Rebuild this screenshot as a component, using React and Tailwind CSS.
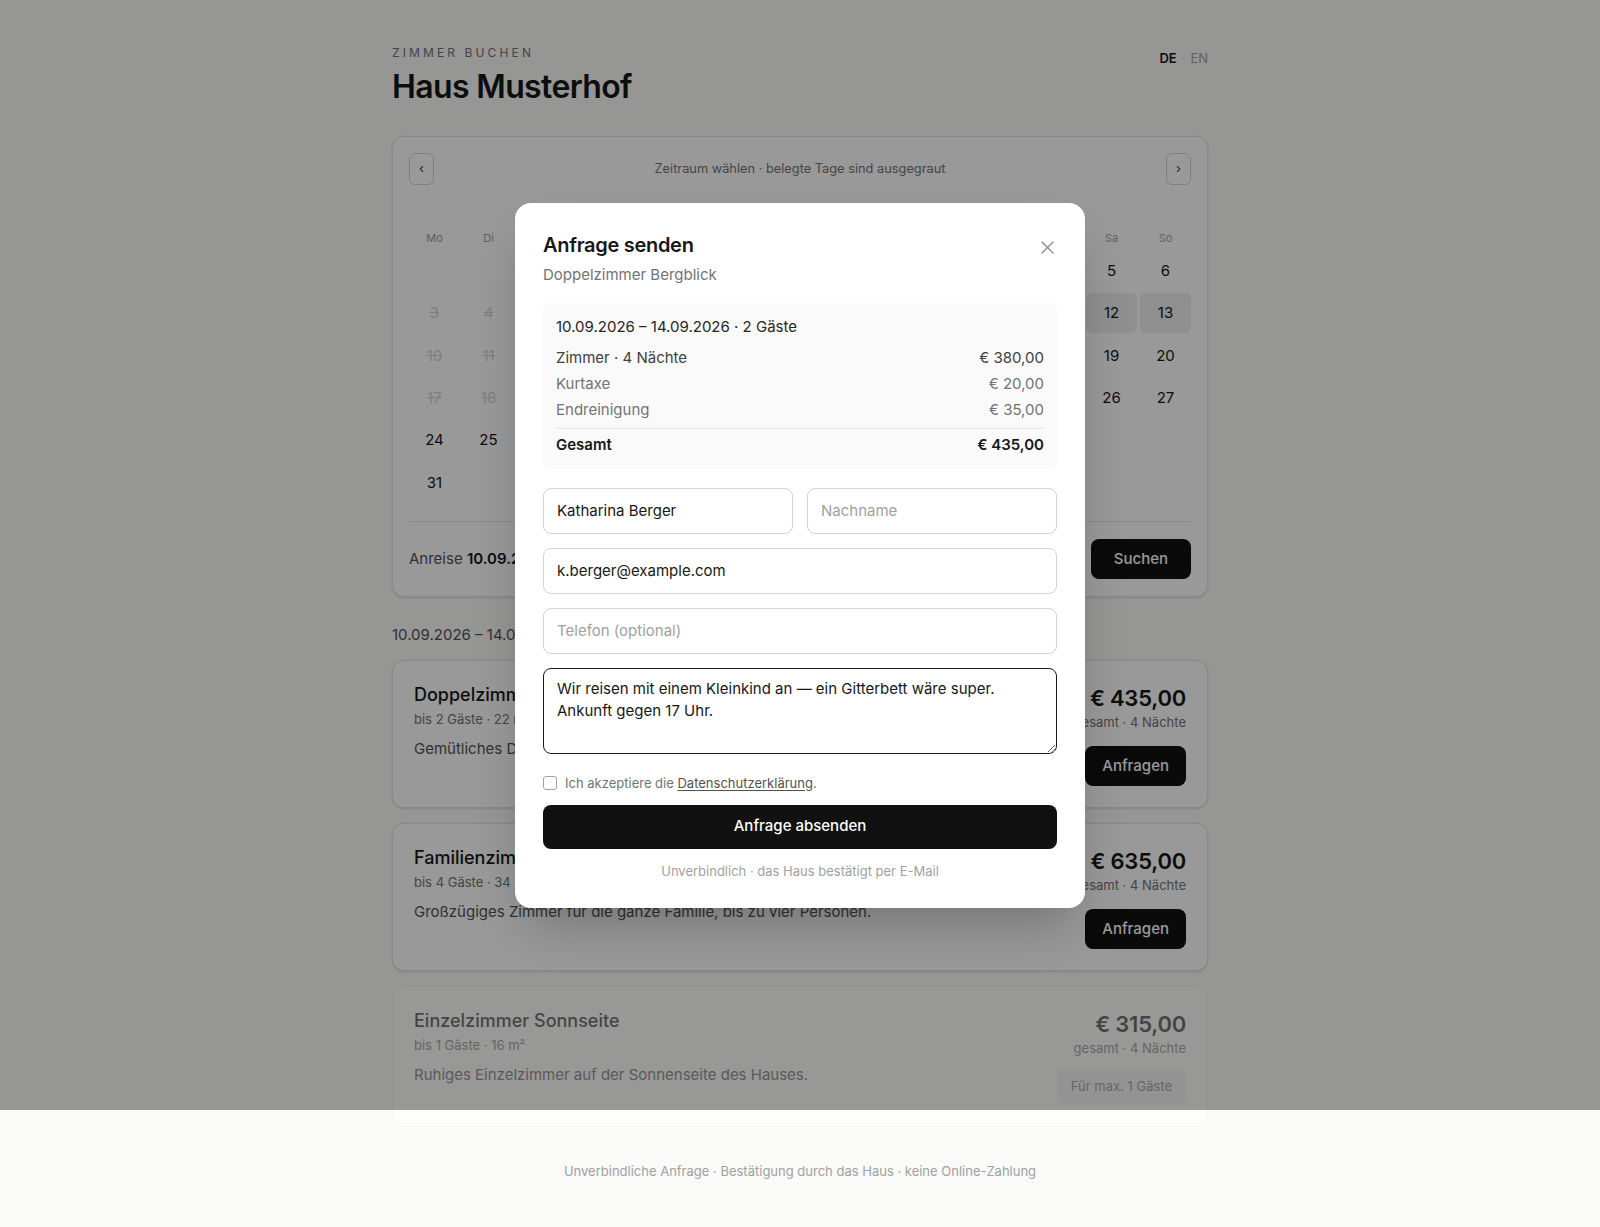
import React, { useEffect, useRef } from "react";

const weekdays = ["Mo", "Di", "Mi", "Do", "Fr", "Sa", "So"];

function Month({ title, offset, days, booked, start, end }) {
  const cells = [];
  for (let i = 0; i < offset; i++) cells.push(null);
  for (let d = 1; d <= days; d++) cells.push(d);
  return (
    <div>
      <div className="text-center text-[14px] leading-5 font-medium text-neutral-800">{title}</div>
      <div className="mt-[8px] grid grid-cols-7 gap-[3px]">
        {weekdays.map((w) => (
          <div key={w} className="text-center text-[11px] leading-[14px] text-neutral-400">
            {w}
          </div>
        ))}
      </div>
      <div className="mt-[6px] grid grid-cols-7 gap-x-[3px] gap-y-[2.4px]">
        {cells.map((d, i) => {
          if (d === null) return <div key={i} className="h-10" />;
          const isBooked = booked.includes(d);
          const isEdge = d === start || d === end;
          const inRange = start && end && d > start && d < end;
          let cls = "text-neutral-900";
          if (isBooked) cls = "text-neutral-300 line-through";
          if (isEdge) cls = "bg-neutral-900 text-white";
          if (inRange) cls = "bg-[#eeeeee] text-neutral-900";
          return (
            <div
              key={i}
              className={"flex h-10 items-center justify-center rounded-md text-[15px] " + cls}
            >
              {d}
            </div>
          );
        })}
      </div>
    </div>
  );
}

function Room({ title, meta, desc, price, disabled }) {
  return (
    <div
      className={
        "flex justify-between rounded-xl border bg-white p-[21px] " +
        (disabled ? "border-neutral-100 opacity-60" : "border-neutral-200 shadow-sm")
      }
    >
      <div>
        <div className="text-[18px] leading-[26px] font-medium text-neutral-900">{title}</div>
        <div className="mt-[2px] text-[13px] leading-[18px] text-neutral-500">{meta}</div>
        <div className="mt-[10px] text-[15px] leading-[22px] text-neutral-600">{desc}</div>
      </div>
      <div className="flex flex-col items-end">
        <div className="mt-[1px] text-[22px] leading-[30px] font-semibold tracking-[-0.01em] text-neutral-900">{price}</div>
        <div className="text-[13px] leading-[18px] text-neutral-500">gesamt · 4 Nächte</div>
        {disabled ? (
          <div className="mt-[12px] flex h-[36px] items-center rounded-lg bg-neutral-100 px-[14px] text-[13px] text-neutral-500">
            Für max. 1 Gäste
          </div>
        ) : (
          <button className="mt-[15px] h-10 rounded-lg bg-[#111111] px-[17px] text-[15px] font-medium text-white">
            Anfragen
          </button>
        )}
      </div>
    </div>
  );
}

function Input({ value, placeholder }) {
  return (
    <input
      readOnly
      defaultValue={value}
      placeholder={placeholder}
      className="h-[46px] w-full rounded-lg border border-neutral-300 bg-white px-[13px] text-[15px] text-neutral-900 outline-none placeholder:text-neutral-400"
    />
  );
}

export default function App() {
  const ta = useRef(null);
  useEffect(() => {
    const el = ta.current;
    if (el) {
      el.focus();
      const n = el.value.length;
      el.setSelectionRange(n, n);
    }
  }, []);

  return (
    <div className="relative min-h-[1227px] bg-[#fafaf9] font-['Inter',sans-serif] text-neutral-900">
      <div className="mx-auto w-[816px] pt-[45px] pb-[45px]">
        <header className="flex items-start justify-between">
          <div>
            <div className="text-[12px] leading-4 tracking-[0.26em] text-neutral-500">ZIMMER BUCHEN</div>
            <h1 className="mt-[7px] text-[32px] leading-[38px] font-semibold tracking-[-0.02em] text-neutral-900">
              Haus Musterhof
            </h1>
          </div>
          <div className="mt-[3px] flex items-center gap-[5px] text-[13px] leading-5">
            <span className="font-semibold text-neutral-900">DE</span>
            <span className="text-neutral-300">·</span>
            <span className="text-neutral-400">EN</span>
          </div>
        </header>

        <section className="mt-[30px] rounded-xl border border-neutral-200 bg-white px-4 pt-4 pb-[17px] shadow-sm">
          <div className="flex items-center justify-between">
            <button className="flex h-8 w-[25px] items-center justify-center rounded-md border border-neutral-300 text-[13px] text-neutral-700">
              ‹
            </button>
            <span className="text-[12.8px] text-neutral-500">Zeitraum wählen · belegte Tage sind ausgegraut</span>
            <button className="flex h-8 w-[25px] items-center justify-center rounded-md border border-neutral-300 text-[13px] text-neutral-700">
              ›
            </button>
          </div>
          <div className="mt-[18px] grid grid-cols-2 gap-8">
            <Month
              title="August 2026"
              offset={5}
              days={31}
              booked={[3, 4, 5, 6, 7, 8, 9, 10, 11, 12, 13, 14, 15, 16, 17, 18, 19, 20, 21, 22, 23]}
            />
            <Month title="September 2026" offset={1} days={30} booked={[]} start={10} end={14} />
          </div>
          <div className="mt-[18px] flex items-center justify-between border-t border-neutral-200 pt-[17px]">
            <div className="text-[15px] text-neutral-600">
              Anreise <span className="font-semibold text-neutral-900">10.09.2026</span>
              <span className="mx-2 text-neutral-300">→</span>
              Abreise <span className="font-semibold text-neutral-900">14.09.2026</span>
            </div>
            <button className="h-10 rounded-lg bg-[#111111] px-[23px] text-[15px] font-medium text-white">
              Suchen
            </button>
          </div>
        </section>

        <div className="mt-[27px] text-[15px] leading-[22px] text-neutral-600">
          10.09.2026 – 14.09.2026 · 4 Nächte · 2 Gäste
        </div>

        <div className="mt-[14px] flex flex-col gap-[15px]">
          <Room
            title="Doppelzimmer Bergblick"
            meta="bis 2 Gäste · 22 m²"
            desc="Gemütliches Doppelzimmer mit Balkon und Blick auf die Berge."
            price="€ 435,00"
          />
          <Room
            title="Familienzimmer Almrausch"
            meta="bis 4 Gäste · 34 m²"
            desc="Großzügiges Zimmer für die ganze Familie, bis zu vier Personen."
            price="€ 635,00"
          />
          <Room
            title="Einzelzimmer Sonnseite"
            meta="bis 1 Gäste · 16 m²"
            desc="Ruhiges Einzelzimmer auf der Sonnenseite des Hauses."
            price="€ 315,00"
            disabled
          />
        </div>

        <div className="mt-[34px] text-center text-[13px] leading-5 text-neutral-400">
          Unverbindliche Anfrage · Bestätigung durch das Haus · keine Online-Zahlung
        </div>
      </div>

      <div className="absolute inset-x-0 top-0 flex h-[1110px] items-center justify-center bg-black/40">
        <div className="w-[570px] rounded-2xl bg-white p-7 shadow-2xl">
          <div className="flex items-start justify-between">
            <div className="text-[20px] leading-7 font-semibold tracking-[-0.015em] text-neutral-900">Anfrage senden</div>
            <svg
              className="mt-[10px] mr-[3px]"
              width="13"
              height="13"
              viewBox="0 0 13 13"
              fill="none"
              stroke="#8a8a8a"
              strokeWidth="1.3"
              strokeLinecap="round"
            >
              <path d="M1 1 L12 12 M12 1 L1 12" />
            </svg>
          </div>
          <div className="mt-[5px] text-[15px] leading-[22px] text-neutral-500">Doppelzimmer Bergblick</div>

          <div className="mt-[17px] rounded-lg bg-[#fafafa] px-[13px] pt-[13px] pb-[13px] text-[15px] leading-[22px]">
            <div className="text-neutral-800">10.09.2026 – 14.09.2026 · 2 Gäste</div>
            <div className="mt-[9px] flex flex-col gap-1">
              <div className="flex justify-between text-neutral-700">
                <span>Zimmer · 4 Nächte</span>
                <span>€ 380,00</span>
              </div>
              <div className="flex justify-between text-neutral-500">
                <span>Kurtaxe</span>
                <span>€ 20,00</span>
              </div>
              <div className="flex justify-between text-neutral-500">
                <span>Endreinigung</span>
                <span>€ 35,00</span>
              </div>
            </div>
            <div className="mt-[7px] flex justify-between border-t border-neutral-200 pt-[5px] font-semibold text-neutral-900">
              <span>Gesamt</span>
              <span>€ 435,00</span>
            </div>
          </div>

          <div className="mt-[19px] flex flex-col gap-[14px]">
            <div className="grid grid-cols-2 gap-[14px]">
              <Input value="Katharina Berger" />
              <Input placeholder="Nachname" />
            </div>
            <Input value="k.berger@example.com" />
            <Input placeholder="Telefon (optional)" />
            <textarea
              ref={ta}
              defaultValue={"Wir reisen mit einem Kleinkind an — ein Gitterbett wäre super. Ankunft gegen 17 Uhr."}
              className="block h-[86px] w-full rounded-lg border-[1.5px] border-neutral-900 bg-white px-[13px] py-[9px] text-[15px] leading-[22px] text-neutral-900 caret-neutral-900 outline-none"
            />
          </div>

          <label className="mt-[19px] flex items-center gap-2 text-[13px] leading-5 text-neutral-500">
            <span className="h-[14px] w-[14px] rounded-[3px] border border-neutral-400 bg-white" />
            <span>
              Ich akzeptiere die <span className="text-neutral-600 underline underline-offset-2">Datenschutzerklärung</span>.
            </span>
          </label>

          <button className="mt-[12px] h-[44px] w-full rounded-lg bg-[#111111] text-[15px] font-medium text-white">
            Anfrage absenden
          </button>

          <div className="mt-[13px] text-center text-[13px] leading-[18px] text-neutral-400">
            Unverbindlich · das Haus bestätigt per E-Mail
          </div>
        </div>
      </div>
    </div>
  );
}
